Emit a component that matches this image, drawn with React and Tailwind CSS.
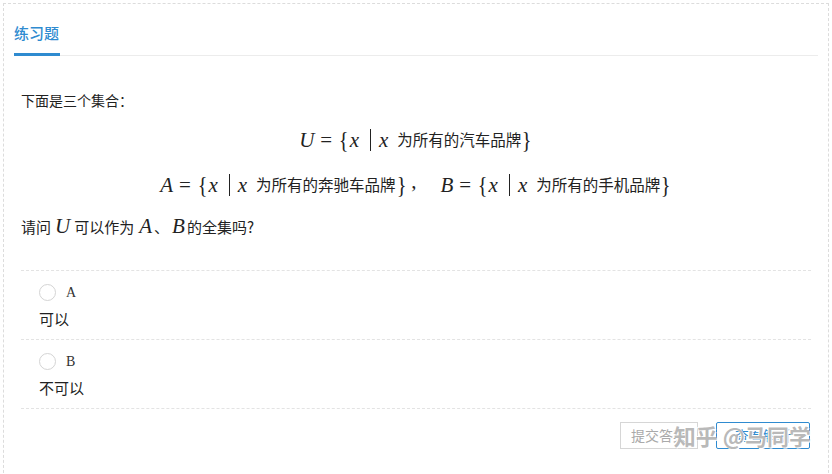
const serif = { fontFamily: '"Liberation Serif", "Times New Roman", serif' }

function V({ children }) {
  return <span className="italic font-['Liberation_Serif',serif] text-[21px] leading-[24px]">{children}</span>
}

function Op({ children }) {
  return <span className="font-['Liberation_Serif',serif] text-[21px] leading-[24px] mx-[6px]">{children}</span>
}

function Brace({ children }) {
  return <span className="font-['Liberation_Serif',serif] text-[24px] leading-[24px] font-light scale-x-[0.85] inline-block">{children}</span>
}

function SetLine({ name, desc }) {
  return (
    <span className="inline-flex items-center whitespace-nowrap">
      <V>{name}</V>
      <Op>=</Op>
      <Brace>{'{'}</Brace>
      <V>x</V>
      <span className="ml-[11px] mr-[8px] inline-block h-[22px] w-px bg-[#222]" />
      <V>x</V>
      <span className="ml-[9px] text-[15.5px]">{desc}</span>
      <Brace>{'}'}</Brace>
    </span>
  )
}

function Option({ letter, text }) {
  return (
    <div className="border-b border-dashed border-[#e3e3e3] pl-[18px] pt-[12px] pb-[10px]">
      <div className="flex items-center h-[18px]">
        <span className="inline-block h-[17px] w-[17px] rounded-full border border-[#d4d4d4] bg-white" />
        <span className="ml-[10px] text-[14px] text-[#333]" style={serif}>{letter}</span>
      </div>
      <div className="mt-[8px] text-[15px] text-[#222] leading-[20px]">{text}</div>
    </div>
  )
}

export default function App() {
  return (
    <div className="w-[832px] h-[474px] bg-white overflow-hidden pt-[3px] pl-[3px] pr-[3px] font-['Noto_Sans_CJK_SC','Liberation_Sans',sans-serif] text-[#222]">
      <div className="h-[480px] border-t border-l border-r border-dashed border-[#dcdcdc]">
        <div className="flex items-end h-[52px] mx-[10px] border-b border-[#ececec]">
          <div className="h-[52px] flex flex-col justify-end">
            <div className="text-[15px] leading-[20px] text-[#2f8bd0] font-medium">练习题</div>
            <div className="mt-[10px] h-[3px] w-[46px] bg-[#2f8bd0] mb-[-1px]" />
          </div>
        </div>

        <div className="px-[17px]">
          <div className="mt-[34px] text-[14px] leading-[20px]">下面是三个集合：</div>
          <div className="mt-[16px] flex justify-center h-[28px] items-center">
            <SetLine name="U" desc="为所有的汽车品牌" />
          </div>
          <div className="mt-[17px] flex justify-center h-[28px] items-center">
            <SetLine name="A" desc="为所有的奔驰车品牌" />
            <span className="font-['Liberation_Serif',serif] text-[21px] ml-[4px] mr-[24px] self-end mb-[2px]">,</span>
            <SetLine name="B" desc="为所有的手机品牌" />
          </div>
          <div className="mt-[15px] flex items-center text-[15px] leading-[24px]">
            <span>请问</span>
            <span className="mx-[4px]"><V>U</V></span>
            <span>可以作为</span>
            <span className="ml-[5px]"><V>A</V></span>
            <span className="ml-[2px]">、</span>
            <span className="ml-[3px] mr-[2px]"><V>B</V></span>
            <span>的全集吗?</span>
          </div>

          <div className="mt-[31px] border-t border-dashed border-[#e3e3e3]">
            <Option letter="A" text="可以" />
            <Option letter="B" text="不可以" />
          </div>

          <div className="relative flex justify-end mt-[13px] pr-[1px]">
            <button className="h-[27px] w-[78px] border border-[#d6d6d6] text-[14px] text-[#aaa] bg-white">提交答案</button>
            <button className="ml-[18px] h-[27px] w-[94px] border border-[#2f8bd0] rounded-[2px] text-[14px] text-[#2f8bd0] bg-white">查看解析</button>
            <div className="absolute right-[0px] top-[-2px] text-[22px] leading-[30px] font-bold text-[#9a9a9a]/70 pointer-events-none [text-shadow:1px_1px_0_#fff,-1px_-1px_0_#fff]">
              知乎 @马同学
            </div>
          </div>
        </div>
      </div>
    </div>
  )
}
